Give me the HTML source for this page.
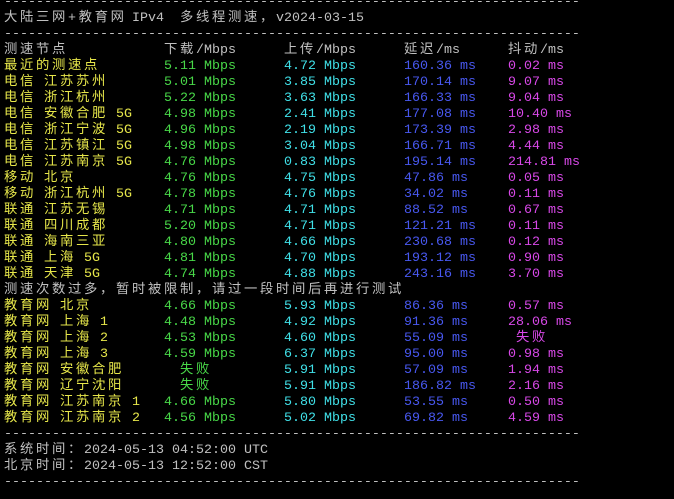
<!DOCTYPE html>
<html><head><meta charset="utf-8"><style>
body{margin:0;background:#000;width:674px;height:499px;overflow:hidden;position:relative;font-family:"Liberation Mono","Noto Sans CJK SC",monospace;font-size:13.33px;}
.l{position:absolute;left:0;height:16px;line-height:16px;white-space:pre;}
.l span{position:absolute;top:0;white-space:pre;}
.c{letter-spacing:2.67px;word-spacing:-2.67px}
.g{color:#c0c0c0}.y{color:#e6e64a}.gr{color:#48d848}.cy{color:#40e0e8}.b{color:#4858f0}.m{color:#d848e8}
</style></head><body>
<div class="l g" style="top:-5px;left:4px">------------------------------------------------------------------------</div>
<div class="l g" style="top:11px;left:4px"><span class="c" style="left:0">大陆三网+教育网</span><span style="left:120px"> IPv4 </span><span class="c" style="left:176px">多线程测速，</span><span style="left:272px">v2024-03-15</span></div>
<div class="l g" style="top:27px;left:4px">------------------------------------------------------------------------</div>
<div class="l g" style="top:43px"><span class="c" style="left:4px">测速节点</span><span class="c" style="left:164px">下载</span><span style="left:196px">/Mbps</span><span class="c" style="left:284px">上传</span><span style="left:316px">/Mbps</span><span class="c" style="left:404px">延迟</span><span style="left:436px">/ms</span><span class="c" style="left:508px">抖动</span><span style="left:540px">/ms</span></div>

<div class="l" style="top:59px"><span class="y c" style="left:4px">最近的测速点</span><span class="gr" style="left:164px">5.11 Mbps</span><span class="cy" style="left:284px">4.72 Mbps</span><span class="b" style="left:404px">160.36 ms</span><span class="m" style="left:508px">0.02 ms</span></div>
<div class="l" style="top:75px"><span class="y c" style="left:4px">电信 江苏苏州</span><span class="gr" style="left:164px">5.01 Mbps</span><span class="cy" style="left:284px">3.85 Mbps</span><span class="b" style="left:404px">170.14 ms</span><span class="m" style="left:508px">9.07 ms</span></div>
<div class="l" style="top:91px"><span class="y c" style="left:4px">电信 浙江杭州</span><span class="gr" style="left:164px">5.22 Mbps</span><span class="cy" style="left:284px">3.63 Mbps</span><span class="b" style="left:404px">166.33 ms</span><span class="m" style="left:508px">9.04 ms</span></div>
<div class="l" style="top:107px"><span class="y c" style="left:4px">电信 安徽合肥</span><span class="y" style="left:116px">5G</span><span class="gr" style="left:164px">4.98 Mbps</span><span class="cy" style="left:284px">2.41 Mbps</span><span class="b" style="left:404px">177.08 ms</span><span class="m" style="left:508px">10.40 ms</span></div>
<div class="l" style="top:123px"><span class="y c" style="left:4px">电信 浙江宁波</span><span class="y" style="left:116px">5G</span><span class="gr" style="left:164px">4.96 Mbps</span><span class="cy" style="left:284px">2.19 Mbps</span><span class="b" style="left:404px">173.39 ms</span><span class="m" style="left:508px">2.98 ms</span></div>
<div class="l" style="top:139px"><span class="y c" style="left:4px">电信 江苏镇江</span><span class="y" style="left:116px">5G</span><span class="gr" style="left:164px">4.98 Mbps</span><span class="cy" style="left:284px">3.04 Mbps</span><span class="b" style="left:404px">166.71 ms</span><span class="m" style="left:508px">4.44 ms</span></div>
<div class="l" style="top:155px"><span class="y c" style="left:4px">电信 江苏南京</span><span class="y" style="left:116px">5G</span><span class="gr" style="left:164px">4.76 Mbps</span><span class="cy" style="left:284px">0.83 Mbps</span><span class="b" style="left:404px">195.14 ms</span><span class="m" style="left:508px">214.81 ms</span></div>
<div class="l" style="top:171px"><span class="y c" style="left:4px">移动 北京</span><span class="gr" style="left:164px">4.76 Mbps</span><span class="cy" style="left:284px">4.75 Mbps</span><span class="b" style="left:404px">47.86 ms</span><span class="m" style="left:508px">0.05 ms</span></div>
<div class="l" style="top:187px"><span class="y c" style="left:4px">移动 浙江杭州</span><span class="y" style="left:116px">5G</span><span class="gr" style="left:164px">4.78 Mbps</span><span class="cy" style="left:284px">4.76 Mbps</span><span class="b" style="left:404px">34.02 ms</span><span class="m" style="left:508px">0.11 ms</span></div>
<div class="l" style="top:203px"><span class="y c" style="left:4px">联通 江苏无锡</span><span class="gr" style="left:164px">4.71 Mbps</span><span class="cy" style="left:284px">4.71 Mbps</span><span class="b" style="left:404px">88.52 ms</span><span class="m" style="left:508px">0.67 ms</span></div>
<div class="l" style="top:219px"><span class="y c" style="left:4px">联通 四川成都</span><span class="gr" style="left:164px">5.20 Mbps</span><span class="cy" style="left:284px">4.71 Mbps</span><span class="b" style="left:404px">121.21 ms</span><span class="m" style="left:508px">0.11 ms</span></div>
<div class="l" style="top:235px"><span class="y c" style="left:4px">联通 海南三亚</span><span class="gr" style="left:164px">4.80 Mbps</span><span class="cy" style="left:284px">4.66 Mbps</span><span class="b" style="left:404px">230.68 ms</span><span class="m" style="left:508px">0.12 ms</span></div>
<div class="l" style="top:251px"><span class="y c" style="left:4px">联通 上海</span><span class="y" style="left:84px">5G</span><span class="gr" style="left:164px">4.81 Mbps</span><span class="cy" style="left:284px">4.70 Mbps</span><span class="b" style="left:404px">193.12 ms</span><span class="m" style="left:508px">0.90 ms</span></div>
<div class="l" style="top:267px"><span class="y c" style="left:4px">联通 天津</span><span class="y" style="left:84px">5G</span><span class="gr" style="left:164px">4.74 Mbps</span><span class="cy" style="left:284px">4.88 Mbps</span><span class="b" style="left:404px">243.16 ms</span><span class="m" style="left:508px">3.70 ms</span></div>
<div class="l g" style="top:283px"><span class="c" style="left:4px">测速次数过多，暂时被限制，请过一段时间后再进行测试</span></div>
<div class="l" style="top:299px"><span class="y c" style="left:4px">教育网 北京</span><span class="gr" style="left:164px">4.66 Mbps</span><span class="cy" style="left:284px">5.93 Mbps</span><span class="b" style="left:404px">86.36 ms</span><span class="m" style="left:508px">0.57 ms</span></div>
<div class="l" style="top:315px"><span class="y c" style="left:4px">教育网 上海</span><span class="y" style="left:100px">1</span><span class="gr" style="left:164px">4.48 Mbps</span><span class="cy" style="left:284px">4.92 Mbps</span><span class="b" style="left:404px">91.36 ms</span><span class="m" style="left:508px">28.06 ms</span></div>
<div class="l" style="top:331px"><span class="y c" style="left:4px">教育网 上海</span><span class="y" style="left:100px">2</span><span class="gr" style="left:164px">4.53 Mbps</span><span class="cy" style="left:284px">4.60 Mbps</span><span class="b" style="left:404px">55.09 ms</span><span class="m c" style="left:516px">失败</span></div>
<div class="l" style="top:347px"><span class="y c" style="left:4px">教育网 上海</span><span class="y" style="left:100px">3</span><span class="gr" style="left:164px">4.59 Mbps</span><span class="cy" style="left:284px">6.37 Mbps</span><span class="b" style="left:404px">95.00 ms</span><span class="m" style="left:508px">0.98 ms</span></div>
<div class="l" style="top:363px"><span class="y c" style="left:4px">教育网 安徽合肥</span><span class="gr c" style="left:180px">失败</span><span class="cy" style="left:284px">5.91 Mbps</span><span class="b" style="left:404px">57.09 ms</span><span class="m" style="left:508px">1.94 ms</span></div>
<div class="l" style="top:379px"><span class="y c" style="left:4px">教育网 辽宁沈阳</span><span class="gr c" style="left:180px">失败</span><span class="cy" style="left:284px">5.91 Mbps</span><span class="b" style="left:404px">186.82 ms</span><span class="m" style="left:508px">2.16 ms</span></div>
<div class="l" style="top:395px"><span class="y c" style="left:4px">教育网 江苏南京</span><span class="y" style="left:132px">1</span><span class="gr" style="left:164px">4.66 Mbps</span><span class="cy" style="left:284px">5.80 Mbps</span><span class="b" style="left:404px">53.55 ms</span><span class="m" style="left:508px">0.50 ms</span></div>
<div class="l" style="top:411px"><span class="y c" style="left:4px">教育网 江苏南京</span><span class="y" style="left:132px">2</span><span class="gr" style="left:164px">4.56 Mbps</span><span class="cy" style="left:284px">5.02 Mbps</span><span class="b" style="left:404px">69.82 ms</span><span class="m" style="left:508px">4.59 ms</span></div>
<div class="l g" style="top:427px;left:4px">------------------------------------------------------------------------</div>
<div class="l g" style="top:443px"><span class="c" style="left:4px">系统时间：</span><span style="left:84px">2024-05-13 04:52:00 UTC</span></div>
<div class="l g" style="top:459px"><span class="c" style="left:4px">北京时间：</span><span style="left:84px">2024-05-13 12:52:00 CST</span></div>
<div class="l g" style="top:475px;left:4px">------------------------------------------------------------------------</div>
</body></html>
